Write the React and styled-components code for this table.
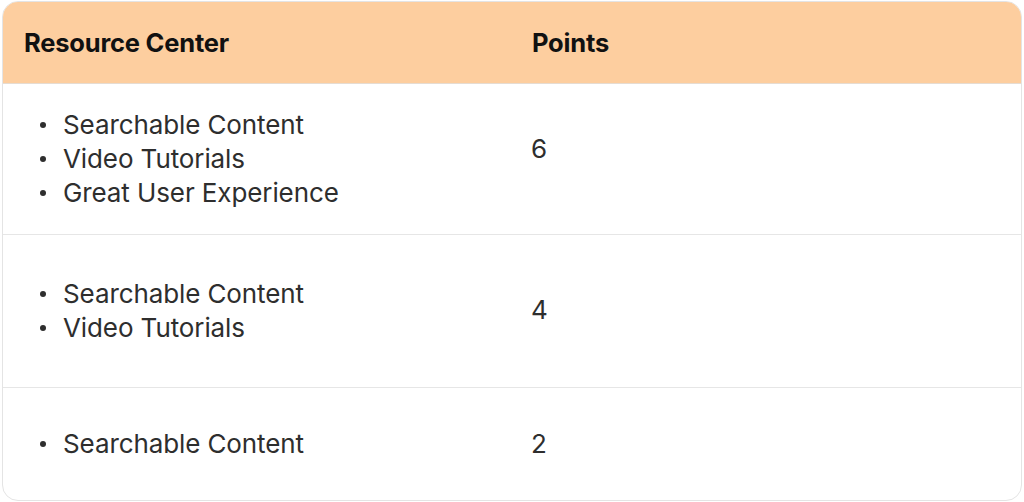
import React from 'react';
import styled, { createGlobalStyle } from 'styled-components';

const rows = [
  { items: ['Searchable Content', 'Video Tutorials', 'Great User Experience'], points: 6, height: 151, lift: 20 },
  { items: ['Searchable Content', 'Video Tutorials'], points: 4, height: 153, lift: 2 },
  { items: ['Searchable Content'], points: 2, height: 114, lift: 0 },
];

const App = () => (
  <>
    <GlobalStyle />
    <Table>
      <HeadRow>
        <HeadCell>Resource Center</HeadCell>
        <HeadCell>Points</HeadCell>
      </HeadRow>
      {rows.map((row, i) => (
        <BodyRow key={i} $height={row.height} $last={i === rows.length - 1}>
          <Cell>
            <List>
              {row.items.map((item) => (
                <Item key={item}>{item}</Item>
              ))}
            </List>
          </Cell>
          <Cell $lift={row.lift}>{row.points}</Cell>
        </BodyRow>
      ))}
    </Table>
  </>
);

export default App;

// Styled Components

const GlobalStyle = createGlobalStyle`
  body {
    margin: 0;
    background: #fff;
    font-family: Inter, 'Noto Sans', sans-serif;
  }
`;

const Table = styled.div`
  margin: 1px 2px;
  width: 1020px;
  height: 500px;
  box-sizing: border-box;
  border: 1px solid #e4e4e4;
  border-radius: 16px;
  overflow: hidden;
  display: flex;
  flex-direction: column;
`;

const HeadRow = styled.div`
  display: grid;
  grid-template-columns: 508px 1fr;
  height: 81px;
  background: #fdce9f;
  border-bottom: 1px solid #e6dcd2;
  align-items: center;
`;

const HeadCell = styled.div`
  padding-left: 21px;
  font-size: 25.5px;
  font-weight: 700;
  letter-spacing: -0.2px;
  color: #111;
`;

const BodyRow = styled.div`
  display: grid;
  grid-template-columns: 508px 1fr;
  height: ${(p) => p.$height}px;
  flex: ${(p) => (p.$last ? '1' : 'none')};
  box-sizing: border-box;
  border-bottom: ${(p) => (p.$last ? 'none' : '1px solid #e6e6e6')};
  align-items: center;
`;

const Cell = styled.div`
  padding-left: 20px;
  padding-bottom: ${(p) => p.$lift || 0}px;
  font-size: 26px;
  line-height: 34px;
  letter-spacing: -0.1px;
  color: #2e2e2e;
`;

const List = styled.ul`
  margin: 0;
  padding: 0 0 0 17px;
  list-style: none;
`;

const Item = styled.li`
  display: flex;
  align-items: center;

  &::before {
    content: '';
    flex: none;
    width: 6px;
    height: 6px;
    border-radius: 50%;
    background: #2e2e2e;
    margin-right: 17px;
  }
`;
